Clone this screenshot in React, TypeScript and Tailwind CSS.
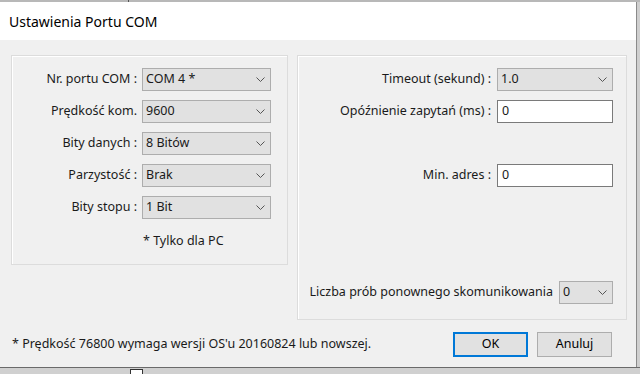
import { type FC } from "react";

const font = { fontFamily: '"Noto Sans", "Open Sans", sans-serif' };

const Chevron: FC = () => (
	<svg width="9" height="5" viewBox="0 0 9 5" className="shrink-0">
		<path d="M0.5 0.5 L4.5 4.5 L8.5 0.5" fill="none" stroke="#555" strokeWidth="1" />
	</svg>
);

const Select: FC<{ value: string; className: string }> = ({ value, className }) => (
	<div
		className={`h-[23px] bg-[#e1e1e1] border border-[#adadad] flex items-center justify-between pl-[3px] pr-[5px] ${className}`}
	>
		<span>{value}</span>
		<Chevron />
	</div>
);

const Input: FC<{ value: string }> = ({ value }) => (
	<div className="h-[23px] w-[116px] bg-white border border-[#7a7a7a] flex items-center pl-[4px]">{value}</div>
);

const leftRows = [
	{ label: "Nr. portu COM :", value: "COM 4 *" },
	{ label: "Prędkość kom.", value: "9600" },
	{ label: "Bity danych :", value: "8 Bitów" },
	{ label: "Parzystość :", value: "Brak" },
	{ label: "Bity stopu :", value: "1 Bit" },
];

export default function App() {
	return (
		<div className="w-[640px] h-[374px] bg-[#cdcdcd] overflow-hidden flex flex-col text-[12.5px] text-[#1a1a1a]" style={font}>
			<div className="h-[2px] bg-[#b8b8b8] shrink-0 flex">
				<div className="w-[128px]" />
				<div className="w-[1px] bg-[#555]" />
			</div>
			<div className="flex shrink-0">
				<div className="w-[637px] h-[365px] flex flex-col border-r border-[#8a8a8a]">
					<div className="h-[38px] bg-white flex items-center pl-[9px] text-[14px] text-black">Ustawienia Portu COM</div>
					<div className="flex-1 bg-[#f0f0f0] flex flex-col pl-[11px] pt-[15px]">
						<div className="flex gap-[9px] items-start">
							{/* left group */}
							<div className="w-[277px] h-[210px] border border-[#dcdcdc] shadow-[inset_1px_1px_0_#fff] flex flex-col pt-[12px] gap-[9px]">
								{leftRows.map((r) => (
									<div key={r.label} className="flex items-center gap-[5px]">
										<div className="w-[125px] text-right">{r.label}</div>
										<Select value={r.value} className="w-[129px]" />
									</div>
								))}
								<div className="pl-[131px] pt-[4px]">* Tylko dla PC</div>
							</div>
							{/* right group */}
							<div className="w-[330px] h-[265px] border border-[#dcdcdc] shadow-[inset_1px_1px_0_#fff] flex flex-col pt-[12px]">
								<div className="flex items-center gap-[6px]">
									<div className="w-[193px] text-right">Timeout (sekund) :</div>
									<Select value="1.0" className="w-[116px]" />
								</div>
								<div className="flex items-center gap-[6px] mt-[9px]">
									<div className="w-[193px] text-right">Opóźnienie zapytań (ms) :</div>
									<Input value="0" />
								</div>
								<div className="flex items-center gap-[6px] mt-[41px]">
									<div className="w-[193px] text-right">Min. adres :</div>
									<Input value="0" />
								</div>
								<div className="flex items-center gap-[6px] mt-auto mb-[15px]">
									<div className="w-[255px] text-right">Liczba prób ponownego skomunikowania</div>
									<Select value="0" className="w-[54px]" />
								</div>
							</div>
						</div>
						<div className="flex items-center mt-[12px] pr-[24px]">
							<div className="flex-1 pl-[1px]">* Prędkość 76800 wymaga wersji OS'u 20160824 lub nowszej.</div>
							<button className="w-[75px] h-[25px] bg-[#e1e1e1] border-2 border-[#0078d7] text-black">OK</button>
							<button className="w-[75px] h-[25px] bg-[#e1e1e1] border border-[#adadad] ml-[9px] text-black">Anuluj</button>
						</div>
					</div>
				</div>
				<div className="flex-1 bg-[#cfcfcf]" />
			</div>
			<div className="flex-1 border-t border-[#6a6a6a] bg-[#d0d0d0] flex pl-[130px] pt-[1px]">
				<div className="w-[13px] h-[13px] border border-[#333] bg-white" />
			</div>
		</div>
	);
}
